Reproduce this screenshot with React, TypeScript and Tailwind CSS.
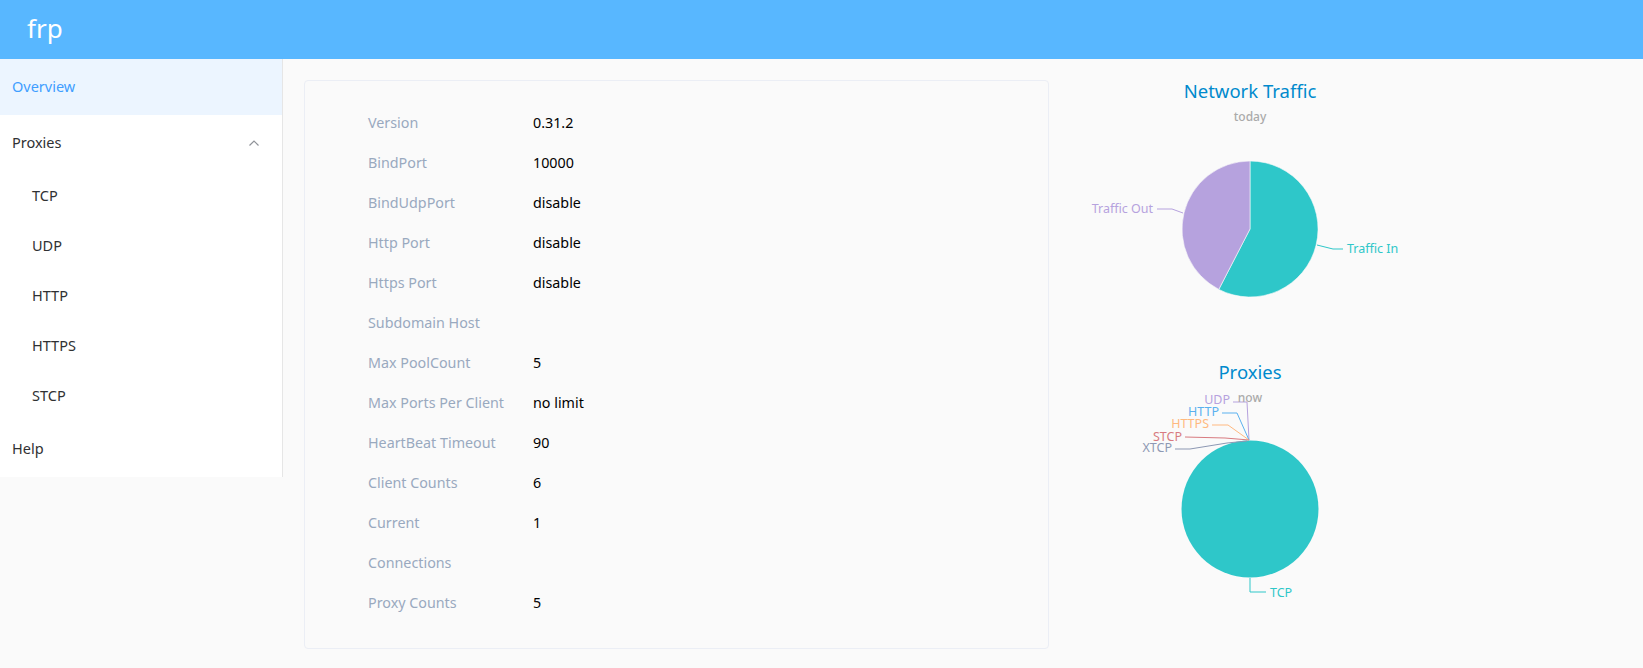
import React from "react";

const navTop = [{ name: "Overview", active: true }];
const proxyTypes = ["TCP", "UDP", "HTTP", "HTTPS", "STCP"];

const serverInfo: [string, string][] = [
  ["Version", "0.31.2"],
  ["BindPort", "10000"],
  ["BindUdpPort", "disable"],
  ["Http Port", "disable"],
  ["Https Port", "disable"],
  ["Subdomain Host", ""],
  ["Max PoolCount", "5"],
  ["Max Ports Per Client", "no limit"],
  ["HeartBeat Timeout", "90"],
  ["Client Counts", "6"],
  ["Current", "1"],
  ["Connections", ""],
  ["Proxy Counts", "5"],
];

function Sidebar() {
  return (
    <aside className="w-[283px] shrink-0 bg-white border-r border-[#e6e6e6] text-[14.5px] text-[#303133]">
      {navTop.map((n) => (
        <div key={n.name} className="h-[56px] flex items-center pl-[12px] pb-px bg-[#ecf5ff] text-[#409eff]">
          {n.name}
        </div>
      ))}
      <div className="h-[56px] flex items-center justify-between pl-[12px] pr-[22px] pb-px">
        <span>Proxies</span>
        <svg width="12" height="8" viewBox="0 0 12 8">
          <polyline points="1.5,6.5 6,2 10.5,6.5" fill="none" stroke="#909399" strokeWidth="1.2" />
        </svg>
      </div>
      {proxyTypes.map((p) => (
        <div key={p} className="h-[50px] flex items-center pl-[32px] pb-px">
          {p}
        </div>
      ))}
      <div className="h-[56px] flex items-center pl-[12px] pb-px">Help</div>
    </aside>
  );
}

function InfoCard() {
  return (
    <section className="w-[745px] h-[569px] shrink-0 rounded-[4px] border border-[#ebeef5] bg-[#fafafa] pt-[22px] pl-[63px]">
      {serverInfo.map(([label, value]) => (
        <div key={label} className="h-[40px] flex items-center text-[14.3px]">
          <span className="w-[165px] text-[#99a9bf]">{label}</span>
          <span className="text-[#000]">{value}</span>
        </div>
      ))}
    </section>
  );
}

const labelFont = { fontFamily: '"Noto Sans", sans-serif' };

function TrafficChart() {
  // Traffic In ~57.6%, starts at 12 o'clock, clockwise
  return (
    <svg width="400" height="270" viewBox="0 -10 400 270" style={labelFont}>
      <text x="200" y="10" textAnchor="middle" dominantBaseline="central" fontSize="18.5" fill="#008acd">
        Network Traffic
      </text>
      <text x="200" y="36" textAnchor="middle" dominantBaseline="central" fontSize="12" fontWeight="500" fill="#aaa">
        today
      </text>
      <path d="M200,149 L200,81 A68,68 0 1 1 168.8,209.4 Z" fill="#2ec7c9" stroke="#fafafa" strokeWidth="0.6" />
      <path d="M200,149 L168.8,209.4 A68,68 0 0 1 200,81 Z" fill="#b6a2de" stroke="#fafafa" strokeWidth="0.6" />
      <polyline points="267,165 283,169 293,169" fill="none" stroke="#2ec7c9" strokeWidth="1" />
      <text x="297" y="168" dominantBaseline="central" fontSize="12.5" fill="#2ec7c9">
        Traffic In
      </text>
      <polyline points="133,133 122,129 107,129" fill="none" stroke="#b6a2de" strokeWidth="1" />
      <text x="103" y="128" textAnchor="end" dominantBaseline="central" fontSize="12.5" fill="#b6a2de">
        Traffic Out
      </text>
    </svg>
  );
}

const proxyLabels = [
  { name: "UDP", color: "#b6a2de", x: 180, y: 59, line: "183,62 197,62 199,100" },
  { name: "HTTP", color: "#5ab1ef", x: 169, y: 71, line: "172,73 187,73 199,100" },
  { name: "HTTPS", color: "#ffb980", x: 159, y: 83, line: "162,85 178,85 199,100" },
  { name: "STCP", color: "#d87a80", x: 132, y: 96, line: "135,97 175,98 199,100" },
  { name: "XTCP", color: "#8d98b3", x: 122, y: 107, line: "125,109 140,109 177,103 197,101" },
];

function ProxiesChart() {
  return (
    <svg width="400" height="280" viewBox="0 0 400 280" style={labelFont}>
      <text x="200" y="31" textAnchor="middle" dominantBaseline="central" fontSize="18.5" fill="#008acd">
        Proxies
      </text>
      <circle cx="200" cy="169" r="68.5" fill="#2ec7c9" />
      {proxyLabels.map((l) => (
        <g key={l.name}>
          <polyline points={l.line} fill="none" stroke={l.color} strokeWidth="1" />
          <text x={l.x} y={l.y} textAnchor="end" dominantBaseline="central" fontSize="12.5" fill={l.color}>
            {l.name}
          </text>
        </g>
      ))}
      <text x="200" y="57" textAnchor="middle" dominantBaseline="central" fontSize="12" fontWeight="500" fill="#aaa">
        now
      </text>
      <polyline points="200,238 200,252 216,252" fill="none" stroke="#2ec7c9" strokeWidth="1" />
      <text x="220" y="252" dominantBaseline="central" fontSize="12.5" fill="#2ec7c9">
        TCP
      </text>
    </svg>
  );
}

export default function App() {
  return (
    <div className="min-h-screen w-full bg-[#fafafa]" style={{ fontFamily: '"Noto Sans", "Liberation Sans", sans-serif' }}>
      <header className="h-[59px] bg-[#58b7ff] flex items-center pl-[27px]">
        <span className="text-[26px] leading-none text-white -mt-[3px]">frp</span>
      </header>
      <div className="flex items-start">
        <Sidebar />
        <main className="flex items-start pl-[21px] pt-[11px]">
          <div className="mt-[10px]">
            <InfoCard />
          </div>
          <div className="w-[400px] ml-px flex flex-col">
            <TrafficChart />
            <ProxiesChart />
          </div>
        </main>
      </div>
    </div>
  );
}
